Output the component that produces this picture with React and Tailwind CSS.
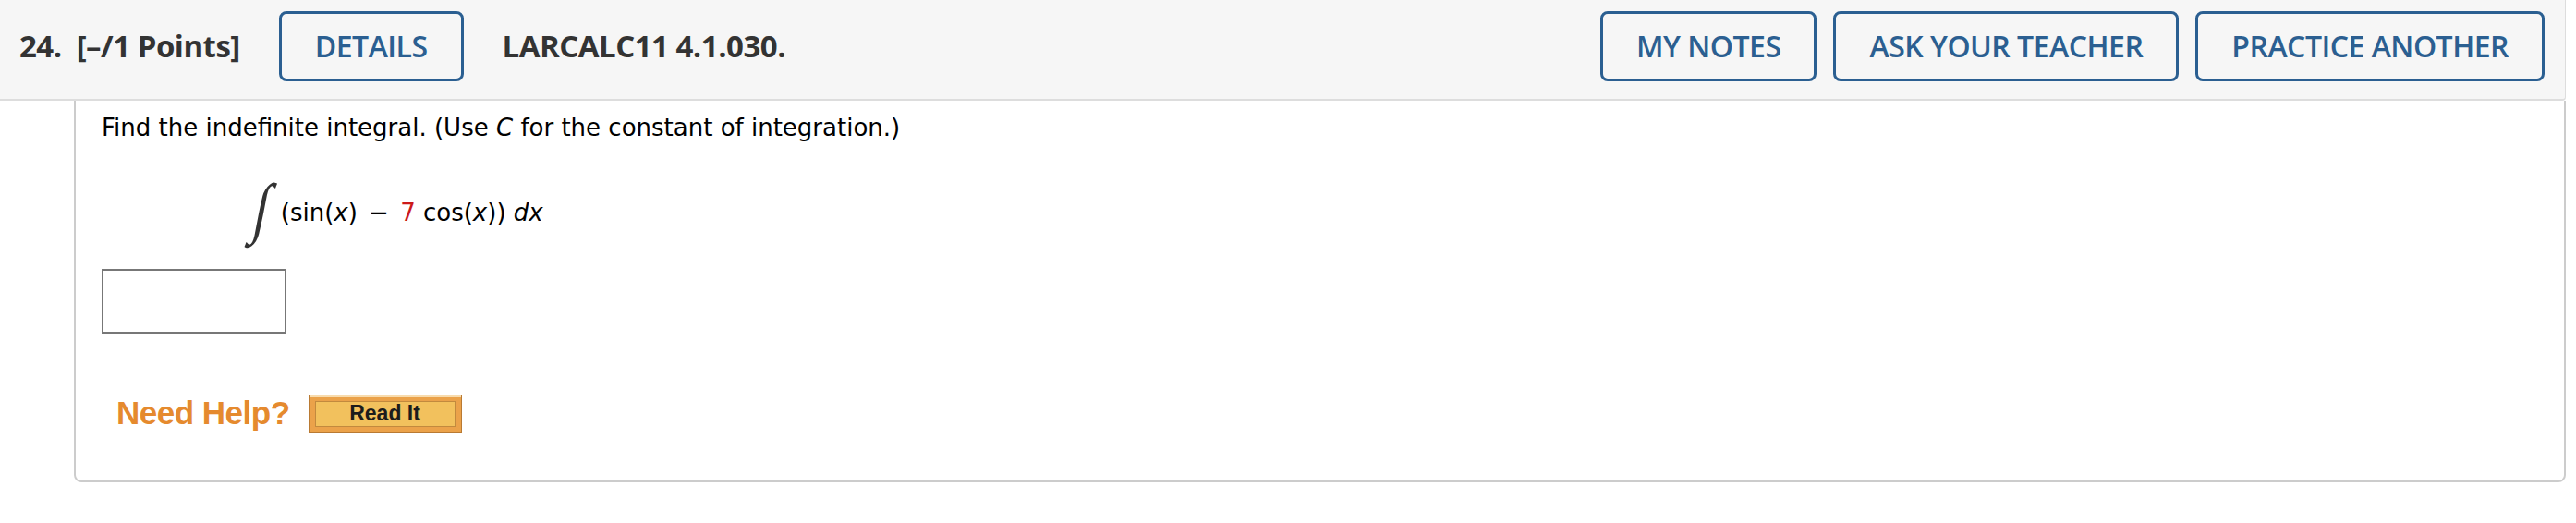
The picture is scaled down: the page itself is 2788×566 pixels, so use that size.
import React from 'react';

const HeaderButton = ({ children }) => (
  <button className="h-[76px] px-[36px] border-[3px] border-[#2b5f91] rounded-[8px] text-[#2b5f91] text-[32px] font-semibold leading-none bg-transparent tracking-[-0.5px]">
    {children}
  </button>
);

const App = () => {
  return (
    <div className="w-[2788px] h-[566px] bg-white" style={{ fontFamily: '"Open Sans", sans-serif' }}>
      <div className="w-[2777px]">
        {/* question header */}
        <div className="h-[109px] pb-[8px] flex items-center bg-[#f6f6f6] border-b-2 border-r border-[#dddddd] rounded-br-[4px] text-[#333333]">
          <span className="ml-[21px] text-[33px] font-bold tracking-[-0.5px]">24.</span>
          <span className="ml-[16px] text-[33px] font-bold tracking-[-0.5px]">[–/1 Points]</span>
          <div className="ml-[42px]">
            <HeaderButton>DETAILS</HeaderButton>
          </div>
          <span className="ml-[42px] text-[33px] font-bold tracking-[-0.5px]">LARCALC11 4.1.030.</span>
          <div className="ml-auto mr-[22px] flex gap-[18px]">
            <HeaderButton>MY NOTES</HeaderButton>
            <HeaderButton>ASK YOUR TEACHER</HeaderButton>
            <HeaderButton>PRACTICE ANOTHER</HeaderButton>
          </div>
        </div>

        {/* question body */}
        <div
          className="ml-[80px] h-[413px] border-2 border-t-0 border-[#cccccc] rounded-b-[8px] pl-[28px] pt-[14px] text-[#000000]"
          style={{ fontFamily: '"DejaVu Sans", Verdana, sans-serif' }}
        >
          <p className="text-[26px] leading-[1.164]">
            Find the indefinite integral. (Use <i>C</i> for the constant of integration.)
          </p>

          <div className="mt-[38px] ml-[164px] flex items-center h-[78px]">
            <span
              className="text-[72px] leading-none text-[#333333] -mt-[10px] inline-block scale-x-[0.8] skew-x-[-14deg]"
              style={{ fontFamily: '"Liberation Serif", serif' }}
            >
              ∫
            </span>
            <span className="ml-[10px] text-[26px] leading-none">
              (sin(<i>x</i>) <span className="mx-[4px]">−</span> <span className="text-[#cc1a1a]">7</span> cos(<i>x</i>)) <i>dx</i>
            </span>
          </div>

          <div className="mt-[22px] w-[200px] h-[70px] border-2 border-[#777777] bg-white" />

          <div className="mt-[60px] ml-[16px] flex items-center gap-[20px]">
            <span className="text-[35px] font-bold text-[#e58a2e] tracking-[-0.5px]" style={{ fontFamily: '"Liberation Sans", Arial, sans-serif' }}>
              Need Help?
            </span>
            <div className="w-[166px] h-[42px] bg-[#eba24a] border border-[#b97a33] shadow-[inset_0_2px_0_#f8dcae] p-[6px]">
              <div className="h-full bg-[#f2c15d] border border-[#c28a3e] flex items-center justify-center">
                <span className="text-[23px] font-bold text-[#1c1c1c]" style={{ fontFamily: '"Liberation Sans", Arial, sans-serif' }}>
                  Read It
                </span>
              </div>
            </div>
          </div>
        </div>
      </div>
    </div>
  );
};

export default App;
